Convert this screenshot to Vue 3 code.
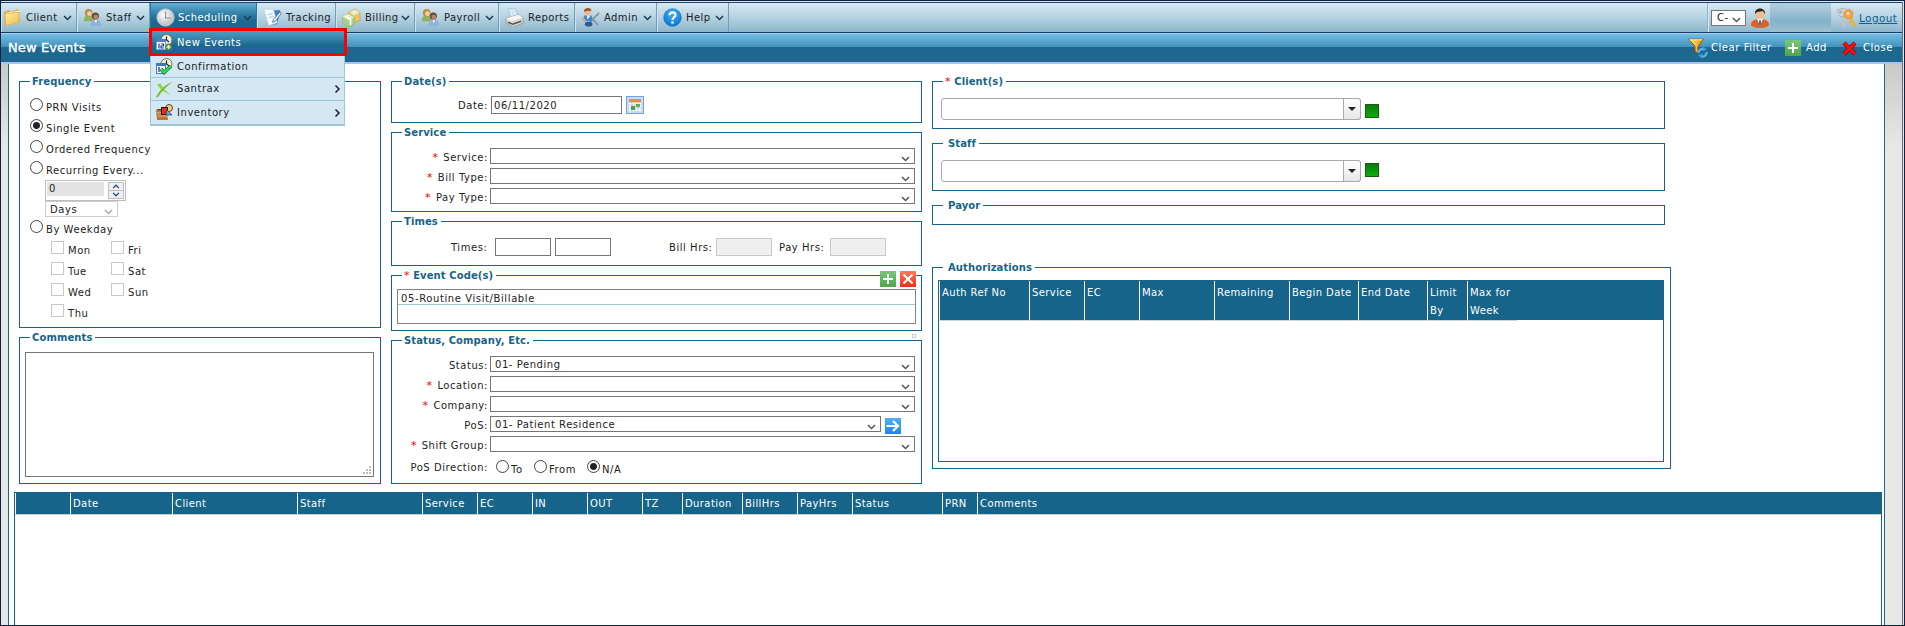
<template>
    <div class="app">
        <svg class="sprite" width="0" height="0">
            <defs>
                <linearGradient id="g-folder" x1="0" y1="0" x2="1" y2="1">
                    <stop offset="0" stop-color="#fff3b4" /><stop offset="1" stop-color="#f0b93c" />
                </linearGradient>
                <radialGradient id="g-clock" cx=".4" cy=".35" r=".7">
                    <stop offset="0" stop-color="#ffffff" /><stop offset="1" stop-color="#b4b8bd" />
                </radialGradient>
                <radialGradient id="g-help" cx=".5" cy=".3" r=".7">
                    <stop offset="0" stop-color="#3fb4f5" /><stop offset="1" stop-color="#0a74cf" />
                </radialGradient>
                <linearGradient id="g-green" x1="0" y1="0" x2="0" y2="1">
                    <stop offset="0" stop-color="#7cc67a" /><stop offset="1" stop-color="#4ca64a" />
                </linearGradient>
                <linearGradient id="g-red" x1="0" y1="0" x2="0" y2="1">
                    <stop offset="0" stop-color="#ff7a5c" /><stop offset="1" stop-color="#ee3018" />
                </linearGradient>
                <linearGradient id="g-blue" x1="0" y1="0" x2="0" y2="1">
                    <stop offset="0" stop-color="#4fb0f7" /><stop offset="1" stop-color="#1a86f0" />
                </linearGradient>
                <linearGradient id="g-funnel" x1="0" y1="0" x2="1" y2="0">
                    <stop offset="0" stop-color="#fff27a" /><stop offset="1" stop-color="#f08a00" />
                </linearGradient>
            </defs>
            <symbol id="ic-folder" viewBox="0 0 20 20">
                <path d="M1 4l5-2 2 2 8-3 1 13-9 4-6-1z" fill="#e2a93a" />
                <path d="M3 5l14-2v12L3 19z" fill="#fffbe6" />
                <path d="M2 6l15-1.500v10.500L3 18.500z" fill="url(#g-folder)" stroke="#d99f33" stroke-width=".7" />
            </symbol>
            <symbol id="ic-people" viewBox="0 0 20 20">
                <path d="M1 14c0-5 2-6 5-6s5 2 5 6z" fill="#8fb35c" />
                <circle cx="6" cy="5" r="4" fill="#b98a3c" />
                <circle cx="6.800" cy="6" r="2.500" fill="#f3cfa3" />
                <path d="M8 19c0-5 2-7 5.500-7s5.500 2 5.500 7z" fill="#8fb2dc" />
                <path d="M12 12l1.500 4 1.500-4z" fill="#fff" />
                <circle cx="13" cy="8.500" r="3.800" fill="#6b4a35" />
                <circle cx="13.500" cy="9.500" r="2.500" fill="#b98468" />
            </symbol>
            <symbol id="ic-clock" viewBox="0 0 20 20">
                <circle cx="10" cy="10" r="9" fill="url(#g-clock)" stroke="#c3c9ce" />
                <path d="M10 4v6.500h6" fill="none" stroke="#8b9096" stroke-width="1.200" />
            </symbol>
            <symbol id="ic-tracking" viewBox="0 0 20 20">
                <path d="M6 3l12-1-3 15-9 1z" fill="#3d83c4" />
                <path d="M1 1l10 .5 4 14-9 3z" fill="#f4f9fd" stroke="#b4cfe4" stroke-width=".6" />
                <path d="M5 7l5-1M6 10l5-1" stroke="#9cc0dd" />
                <path d="M18 4l-7 8-1 3 3-1 6-8z" fill="#e8f3fa" stroke="#3c688c" stroke-width=".8" />
            </symbol>
            <symbol id="ic-money" viewBox="0 0 20 20">
                <path d="M7 4l7-3 5 4v8l-7 3-5-5z" fill="#efc65c" stroke="#c99a3b" stroke-width=".6" />
                <path d="M8 4l6-2.500 4.500 3.500-6 3z" fill="#e6f0cf" />
                <path d="M0 9l7-3 6 4v7l-6 3-7-5z" fill="#a9cf88" stroke="#83ad66" stroke-width=".6" />
                <path d="M0 9l7-3 6 4-6 3z" fill="#ddeec8" />
                <path d="M3 8l6 4v6" fill="none" stroke="#fff" stroke-width="1.800" />
            </symbol>
            <symbol id="ic-printer" viewBox="0 0 20 20">
                <path d="M3 1l8-1 3 8-8 3z" fill="#cfe6fb" stroke="#9fb8d0" stroke-width=".7" />
                <path d="M1 11l13-4 5 3v6l-11 4-7-4z" fill="#d8d8d8" stroke="#888" stroke-width=".7" />
                <path d="M1 11l13-4 5 3-12 4z" fill="#f5f5f5" />
                <path d="M3 15l5 2 9-3" fill="none" stroke="#555" stroke-width="1.500" />
            </symbol>
            <symbol id="ic-admin" viewBox="0 0 20 20">
                <path d="M19 5l-2 2 1 1M17 7L8 17M9 8l9 10" stroke="#8d959c" stroke-width="1.700" fill="none" />
                <circle cx="7" cy="4" r="3.500" fill="#f1b98a" />
                <path d="M3 4c0-5 8-5 8-1l-4 0z" fill="#a14f1b" />
                <path d="M3 8h8l1 6H3z" fill="#3988da" />
                <path d="M6 8l1 4 3-4z" fill="#fff" />
                <path d="M1 10l4 4" stroke="#e6a173" stroke-width="2" />
                <ellipse cx="8" cy="17" rx="4" ry="2.500" fill="#2c5c98" />
            </symbol>
            <symbol id="ic-help" viewBox="0 0 20 20">
                <circle cx="10" cy="10" r="9.300" fill="url(#g-help)" stroke="#0f6fc0" stroke-width=".6" />
                <path d="M6.800 7.600C7 3.500 13.500 3.700 13.200 7.500c-.2 2.300-3.200 2.300-3.200 5" fill="none" stroke="#fff" stroke-width="2.200" />
                <circle cx="10" cy="15.300" r="1.400" fill="#fff" />
            </symbol>
            <symbol id="ic-event-add" viewBox="0 0 17 17">
                <circle cx="10.500" cy="6" r="5.500" fill="#f3eee0" stroke="#7a705c" />
                <path d="M10.500 2.500V6l2.500 2" fill="none" stroke="#222" stroke-width="1.200" />
                <rect x=".5" y="5.500" width="9" height="10" fill="#fff" stroke="#7f9fd6" />
                <rect x="0" y="5" width="10" height="3" fill="#4a7ccf" />
                <path d="M3 9.500v5M5 10h2.500v2H5v2h3" fill="none" stroke="#163a9a" stroke-width="1.200" />
                <circle cx="12.500" cy="13" r="3.500" fill="#4f8f32" />
                <path d="M12.500 11v4M10.500 13h4" stroke="#e6f5dc" stroke-width="1.300" />
            </symbol>
            <symbol id="ic-event-ok" viewBox="0 0 17 17">
                <circle cx="10.500" cy="6" r="5.500" fill="#f3eee0" stroke="#7a705c" />
                <path d="M10.500 2.500V6l2.500 2" fill="none" stroke="#222" stroke-width="1.200" />
                <rect x=".5" y="5.500" width="9" height="10" fill="#fff" stroke="#4a7ccf" />
                <rect x="0" y="5" width="10" height="3" fill="#3f78b8" />
                <path d="M3 9v5" stroke="#163a9a" stroke-width="1.300" />
                <path d="M5 11l3 3.500L15 8" fill="none" stroke="#137a2a" stroke-width="3.600" />
                <path d="M5 11l3 3.500L15 8" fill="none" stroke="#2fe05a" stroke-width="2" />
            </symbol>
            <symbol id="ic-santrax" viewBox="0 0 17 17">
                <path d="M1 3.500l3.500-1c2 4 5 8 10 11-6-2-9-4-13.500-10z" fill="#8fd43a" />
                <path d="M16.500 1C10 6 6 10 2.500 15.500L0 16.500C3 10 8 4 16.500 1z" fill="#6fbe24" />
            </symbol>
            <symbol id="ic-inventory" viewBox="0 0 17 17">
                <path d="M0 6h11v4l1 6H1z" fill="#b8773a" />
                <path d="M1 9h10M2 12h9" stroke="#e8b880" />
                <path d="M0 6l2-1h10v2z" fill="#6d3d18" />
                <circle cx="13" cy="4" r="3.500" fill="#f1cf85" stroke="#5d4620" />
                <rect x="5.500" y="3.500" width="6" height="7" fill="#d9301c" stroke="#3d0b05" />
                <path d="M11 6l5 5h-6z" fill="#6ba3d8" stroke="#24405c" stroke-width=".7" />
            </symbol>
            <symbol id="ic-user" viewBox="0 0 20 20">
                <path d="M1 17c0-4 3-5 6-6h6c3 1 6 2 6 6-2 4-16 4-18 0z" fill="#e0601c" />
                <path d="M7 11h6l-3 7z" fill="#f4f4f4" />
                <path d="M9.300 12h1.400l.8 4-1.500 2-1.500-2z" fill="#3b72b8" />
                <circle cx="10" cy="6.500" r="4.500" fill="#edbd91" />
                <path d="M5 6C4-1.500 16-1.500 15 6l-2-3-6 1z" fill="#2b211e" />
            </symbol>
            <symbol id="ic-keys" viewBox="0 0 20 22">
                <path d="M8 8v13M8 16H5M8 19H6" stroke="#bfc3c6" stroke-width="2.600" />
                <path d="M1 3l8-2 3 3-3 5-5 1z" fill="#d0d3d6" stroke="#a4a8ac" stroke-width=".7" />
                <circle cx="4.500" cy="5" r="1.300" fill="#8fa9b8" />
                <path d="M13 9l6 10M16 14l-3 2M18 17l-2 2" stroke="#e6b33e" stroke-width="2.400" />
                <path d="M8 5l5-3 4 3-1 6-5 1-3-3z" fill="#f3a445" stroke="#d98a25" stroke-width=".7" />
                <circle cx="12" cy="6.500" r="1.500" fill="#fbe6c0" />
            </symbol>
            <symbol id="ic-funnel" viewBox="0 0 20 20">
                <path d="M.7 1.200h14.600L10 8.500V15l-3-1.500v-5z" fill="url(#g-funnel)" stroke="#8d4a00" stroke-width=".9" />
                <path d="M1.500 1.800h13" stroke="#fff3c0" />
                <path d="M10.500 15a4 4 0 0 1 6-3.500M18.500 14a4 4 0 0 1-6 4" fill="none" stroke="#5db4ee" stroke-width="2.200" />
                <path d="M15 8.500l4 3-4.500 2zM14 20l-4-2.500 4.500-2.500z" fill="#3f9be0" />
            </symbol>
            <symbol id="ic-plus" viewBox="0 0 16 16">
                <rect width="16" height="16" fill="url(#g-green)" />
                <path d="M8 3v10M3 8h10" stroke="#fff" stroke-width="2" />
            </symbol>
            <symbol id="ic-remove" viewBox="0 0 16 16">
                <rect width="16" height="16" fill="url(#g-red)" />
                <path d="M3.500 3.500l9 9M12.500 3.500l-9 9" stroke="#fff" stroke-width="2" />
            </symbol>
            <symbol id="ic-go" viewBox="0 0 16 16">
                <rect width="16" height="16" fill="url(#g-blue)" />
                <path d="M1.500 8h11M8 3l5 5-5 5" fill="none" stroke="#fff" stroke-width="2.200" />
            </symbol>
            <symbol id="ic-close" viewBox="0 0 15 15">
                <path d="M2 2l11 11M13 2L2 13" stroke="#7d0000" stroke-width="4" />
                <path d="M2 2l11 11M13 2L2 13" stroke="#ff0c0c" stroke-width="3" />
            </symbol>
            <symbol id="ic-calendar" viewBox="0 0 18 18">
                <rect x=".5" y=".5" width="17" height="17" fill="#c9dcf5" stroke="#7aa0d8" />
                <rect x="3" y="3" width="12" height="12" fill="#fff" />
                <rect x="3" y="3" width="12" height="3.500" fill="#f58a3c" />
                <path d="M3 9h12M3 12h12M6 7v8M9 7v8M12 7v8" stroke="#b9bfd0" stroke-width=".8" />
                <rect x="5" y="10" width="4" height="4" fill="#4ea34e" />
                <rect x="10" y="8" width="4" height="3" fill="#5bb05b" />
            </symbol>
            <symbol id="ic-caret" viewBox="0 0 9 6">
                <path d="M1 1l3.500 3.500L8 1" fill="none" stroke="currentColor" stroke-width="1.500" />
            </symbol>
        </svg>

        <div class="shell">
            <nav class="menubar">
                <div v-for="item in menu" :key="item.name" class="menu-item" :class="{ active: item.active, first: item.name === 'Client' }" :style="{ width: item.width + 'px' }">
                    <svg class="menu-icon"><use :href="'#ic-' + item.icon" /></svg>
                    <span>{{ item.name }}</span>
                    <svg v-if="item.sub" class="caret"><use href="#ic-caret" /></svg>
                </div>
                <div class="user-area">
                    <div class="select company-select">C-<svg class="caret"><use href="#ic-caret" /></svg></div>
                    <svg class="user-icon"><use href="#ic-user" /></svg>
                    <div class="user-name"></div>
                    <svg class="keys-icon"><use href="#ic-keys" /></svg>
                    <a class="logout">Logout</a>
                </div>
                <div class="dropdown">
                    <div v-for="item in submenu" :key="item.name" class="sub-item" :class="{ current: item.current }">
                        <svg class="sub-icon"><use :href="'#ic-' + item.icon" /></svg>
                        <span>{{ item.name }}</span>
                        <svg v-if="item.sub" class="caret side"><use href="#ic-caret" /></svg>
                    </div>
                </div>
            </nav>

            <header class="titlebar">
                <h1>New Events</h1>
                <div class="action clear"><svg class="i20"><use href="#ic-funnel" /></svg>Clear Filter</div>
                <div class="action add"><svg class="i16"><use href="#ic-plus" /></svg>Add</div>
                <div class="action close"><svg class="i15"><use href="#ic-close" /></svg>Close</div>
            </header>

            <div class="body">
                <main class="panel">
                    <div class="columns">
                        <div class="col col-left">
                            <fieldset class="box frequency">
                                <legend>Frequency</legend>
                                <label v-for="f in frequencies" :key="f" class="radio-row">
                                    <i class="radio" :class="{ on: f === frequency }"></i><span>{{ f }}</span>
                                </label>
                                <div class="spinner">
                                    <div class="spin-value">0</div>
                                    <div class="spin-buttons">
                                        <b><svg class="caret up"><use href="#ic-caret" /></svg></b>
                                        <b><svg class="caret"><use href="#ic-caret" /></svg></b>
                                    </div>
                                </div>
                                <div class="select days">Days<svg class="caret"><use href="#ic-caret" /></svg></div>
                                <label class="radio-row"><i class="radio"></i><span>By Weekday</span></label>
                                <div class="weekdays">
                                    <label v-for="d in weekdays" :key="d" class="day"><i class="check"></i><span>{{ d }}</span></label>
                                </div>
                            </fieldset>
                            <fieldset class="box comments">
                                <legend>Comments</legend>
                                <div class="textarea">
                                    <svg width="8" height="8"><path d="M6 0h2v2H6zM3 3h2v2H3zM6 3h2v2H6zM0 6h2v2H0zM3 6h2v2H3zM6 6h2v2H6z" fill="#bdbdbd" /></svg>
                                </div>
                            </fieldset>
                        </div>

                        <div class="col col-mid">
                            <fieldset class="box dates">
                                <legend>Date(s)</legend>
                                <div class="field">
                                    <label>Date:</label>
                                    <div class="input date-input">06/11/2020</div>
                                    <svg class="i18"><use href="#ic-calendar" /></svg>
                                </div>
                            </fieldset>
                            <fieldset class="box service">
                                <legend>Service</legend>
                                <div v-for="s in serviceFields" :key="s" class="field">
                                    <label><em>*</em> {{ s }}:</label>
                                    <div class="select"><svg class="caret"><use href="#ic-caret" /></svg></div>
                                </div>
                            </fieldset>
                            <fieldset class="box times">
                                <legend>Times</legend>
                                <div class="times-row">
                                    <label class="t-label">Times:</label>
                                    <div class="input time"></div>
                                    <div class="input time"></div>
                                    <label class="bill-label">Bill Hrs:</label>
                                    <div class="input time off"></div>
                                    <label class="pay-label">Pay Hrs:</label>
                                    <div class="input time off"></div>
                                </div>
                            </fieldset>
                            <fieldset class="box codes">
                                <legend><em>*</em> Event Code(s)</legend>
                                <div class="code-actions">
                                    <svg class="i16"><use href="#ic-plus" /></svg>
                                    <svg class="i16"><use href="#ic-remove" /></svg>
                                </div>
                                <div class="listbox"><div class="list-row">05-Routine Visit/Billable</div></div>
                                <i class="grip"></i>
                            </fieldset>
                            <fieldset class="box status">
                                <legend>Status, Company, Etc.</legend>
                                <div v-for="s in statusFields" :key="s.label" class="field">
                                    <label><em v-if="s.required">*</em> {{ s.label }}:</label>
                                    <div class="select" :class="{ short: s.go }">{{ s.value }}<svg class="caret"><use href="#ic-caret" /></svg></div>
                                    <svg v-if="s.go" class="i16 go"><use href="#ic-go" /></svg>
                                </div>
                                <div class="field direction">
                                    <label>PoS Direction:</label>
                                    <div v-for="d in directions" :key="d.name" class="dir" :style="{ width: d.width + 'px' }">
                                        <i class="radio" :class="{ on: d.name === 'N/A' }"></i><span>{{ d.name }}</span>
                                    </div>
                                </div>
                            </fieldset>
                        </div>

                        <div class="col col-right">
                            <fieldset class="box picker">
                                <legend class="starred"><em>*</em> Client(s)</legend>
                                <div class="combo-row"><div class="combo"><b></b></div><i class="square low"></i></div>
                            </fieldset>
                            <fieldset class="box picker">
                                <legend>Staff</legend>
                                <div class="combo-row"><div class="combo"><b></b></div><i class="square"></i></div>
                            </fieldset>
                            <fieldset class="box payor"><legend>Payor</legend></fieldset>
                            <fieldset class="box auths">
                                <legend>Authorizations</legend>
                                <div class="auth-table">
                                    <div class="thead">
                                        <div v-for="c in authColumns" :key="c.name" class="th" :style="{ width: c.width + 'px' }">{{ c.name }}</div>
                                    </div>
                                </div>
                            </fieldset>
                        </div>
                    </div>

                    <div class="event-table">
                        <div class="thead">
                            <div v-for="c in eventColumns" :key="c.name" class="th" :style="{ width: c.width + 'px' }">{{ c.name }}</div>
                        </div>
                    </div>
                </main>
            </div>
        </div>
    </div>
</template>

<script setup>
import { ref } from 'vue';

const menu = [
    { name: 'Client', icon: 'folder', width: 76, sub: true },
    { name: 'Staff', icon: 'people', width: 73, sub: true },
    { name: 'Scheduling', icon: 'clock', width: 107, sub: true, active: true },
    { name: 'Tracking', icon: 'tracking', width: 79 },
    { name: 'Billing', icon: 'money', width: 79, sub: true },
    { name: 'Payroll', icon: 'people', width: 84, sub: true },
    { name: 'Reports', icon: 'printer', width: 76 },
    { name: 'Admin', icon: 'admin', width: 82, sub: true },
    { name: 'Help', icon: 'help', width: 72, sub: true }
];

const submenu = [
    { name: 'New Events', icon: 'event-add', current: true },
    { name: 'Confirmation', icon: 'event-ok' },
    { name: 'Santrax', icon: 'santrax', sub: true },
    { name: 'Inventory', icon: 'inventory', sub: true }
];

const frequency = ref('Single Event');
const frequencies = ['PRN Visits', 'Single Event', 'Ordered Frequency', 'Recurring Every...'];
const weekdays = ['Mon', 'Fri', 'Tue', 'Sat', 'Wed', 'Sun', 'Thu'];

const serviceFields = ['Service', 'Bill Type', 'Pay Type'];

const statusFields = [
    { label: 'Status', value: '01- Pending' },
    { label: 'Location', required: true },
    { label: 'Company', required: true },
    { label: 'PoS', value: '01- Patient Residence', go: true },
    { label: 'Shift Group', required: true }
];

const directions = [
    { name: 'To', width: 38 },
    { name: 'From', width: 53 },
    { name: 'N/A', width: 50 }
];

const authColumns = [
    { name: 'Auth Ref No', width: 90 },
    { name: 'Service', width: 55 },
    { name: 'EC', width: 55 },
    { name: 'Max', width: 75 },
    { name: 'Remaining', width: 75 },
    { name: 'Begin Date', width: 69 },
    { name: 'End Date', width: 69 },
    { name: 'Limit By', width: 40 },
    { name: 'Max for Week', width: 50 }
];

const eventColumns = [
    { name: '', width: 55 },
    { name: 'Date', width: 102 },
    { name: 'Client', width: 125 },
    { name: 'Staff', width: 125 },
    { name: 'Service', width: 55 },
    { name: 'EC', width: 55 },
    { name: 'IN', width: 55 },
    { name: 'OUT', width: 55 },
    { name: 'TZ', width: 40 },
    { name: 'Duration', width: 60 },
    { name: 'BillHrs', width: 55 },
    { name: 'PayHrs', width: 55 },
    { name: 'Status', width: 90 },
    { name: 'PRN', width: 35 },
    { name: 'Comments', width: 100 }
];
</script>

<style>
    body {
        margin: 0;
        overflow: hidden;
    }
</style>

<style scoped>
    * {
        box-sizing: border-box;
    }

    .app {
        width: 1905px;
        height: 626px;
        border: 1px solid #0c2142;
        background: #dde6ee;
        padding: 1px 1px 0 0;
        overflow: hidden;
        color: #222;
        font-family: Verdana, "DejaVu Sans", sans-serif;
        font-size: 10px;
        letter-spacing: 0.55px;
        line-height: 14px;
        white-space: nowrap;
    }

    .sprite {
        position: absolute;
    }

    .shell {
        height: 100%;
        border-right: 1px solid #6f6f6f;
        display: flex;
        flex-direction: column;
    }

    em {
        color: #f00000;
        font-style: normal;
        font-weight: normal;
        font-size: 11px;
        margin-right: 1px;
    }

    svg {
        flex: none;
    }

    .caret {
        width: 9px;
        height: 6px;
    }

    .i15 { width: 15px; height: 15px; }
    .i16 { width: 16px; height: 16px; }
    .i18 { width: 18px; height: 18px; }
    .i20 { width: 20px; height: 20px; }

    /* top menu */
    .menubar {
        position: relative;
        display: flex;
        height: 31px;
        flex: none;
        border-top: 1px solid #17486b;
        border-bottom: 1px solid #123f60;
        background: linear-gradient(#d6e9f3, #b5d2e1 50%, #8db5cb);
    }

    .menu-item {
        display: flex;
        align-items: center;
        padding: 0 4px 0 5px;
        border-right: 1px solid #6fa0ba;
        border-left: 1px solid #cfe3ee;
        letter-spacing: 0.42px;
    }

    .menu-item.first {
        padding-left: 1px;
    }

    .menu-item.active {
        color: #fff;
        border-color: #2a769f;
        background: linear-gradient(#67aed3, #3583aa 35%, #1d6890 60%, #1d6890);
    }

    .menu-item .caret {
        margin-left: auto;
        color: #1d3c4e;
    }

    .menu-icon {
        width: 19px;
        height: 19px;
        margin-right: 4px;
    }

    .menu-item.active .menu-icon {
        margin-right: 3px;
    }

    .user-area {
        display: flex;
        align-items: center;
        width: 195px;
        margin-left: auto;
        padding-left: 3px;
        border-left: 1px solid #8db5cb;
        box-shadow: inset 1px 0 #d6e9f3;
    }

    .company-select.select {
        flex: none;
        width: 35px;
        padding: 0 4px 0 5px;
    }

    .user-icon {
        width: 20px;
        height: 20px;
        margin-left: 4px;
    }

    .user-name {
        width: 61px;
        height: 29px;
        background: linear-gradient(#b1cfdf, #a5c5d6 25%, #84b3ca 60%, #8db7cc 80%, #a0c2d3);
    }

    .keys-icon {
        width: 20px;
        height: 22px;
        margin: 0 3px 0 5px;
    }

    .logout {
        color: #0e5f92;
        text-decoration: underline;
        font-size: 10.5px;
        letter-spacing: 0.4px;
    }

    .dropdown {
        position: absolute;
        z-index: 5;
        left: 149px;
        top: 26px;
        width: 195px;
        height: 97px;
        background: #d3e8f3;
        border-bottom: 2px solid #a1c6d6;
        border-left: 1px solid #a1c6d6;
        border-right: 1px solid #a1c6d6;
    }

    .sub-item {
        display: flex;
        align-items: center;
        height: 23px;
        padding: 0 2px 0 5px;
        border-bottom: 1px solid #a1c6d6;
    }

    .sub-item:nth-child(2) {
        height: 22px;
    }

    .sub-item:last-child {
        border-bottom: none;
    }

    .sub-item.current {
        height: 28px;
        margin: -1px -3px 0 -2px;
        padding: 1px 0 0 4px;
        color: #fff;
        background: linear-gradient(#4f9cc3, #3583aa 35%, #1d6890 65%);
        border: 3px solid #fb0000;
    }

    .sub-icon {
        width: 17px;
        height: 17px;
        margin-right: 4px;
    }

    .caret.side {
        transform: rotate(-90deg);
        margin-left: auto;
    }

    /* title */
    .titlebar {
        display: flex;
        align-items: center;
        height: 31px;
        flex: none;
        border-top: 1px solid #a9cdf0;
        border-bottom: 2px solid #b3c0ee;
        background: linear-gradient(#73bde5, #4192b9 13px, #1d6890 13px);
        color: #fff;
    }

    h1 {
        margin: 0 auto 0 7px;
        font-size: 13px;
        font-weight: normal;
        letter-spacing: 0.1px;
        -webkit-text-stroke: 0.4px #fff;
    }

    .action {
        display: flex;
        align-items: center;
    }

    .clear { width: 97px; }
    .clear svg { margin-right: 3px; }
    .add { width: 57px; }
    .add svg { margin-right: 5px; }
    .close { width: 60px; }
    .close svg { margin-right: 6px; }

    .body {
        flex: 1;
        display: flex;
        padding: 0 17px 0 7px;
        background: linear-gradient(#c9c9c9, #dadada 45px, #e8e8e8 85px);
    }

    .panel {
        flex: 1;
        display: flex;
        flex-direction: column;
        border-left: 1px solid #1d6890;
        border-right: 1px solid #1d6890;
        background: #fff;
    }

    .columns {
        display: flex;
        gap: 10px;
        height: 420px;
        flex: none;
        padding: 17px 0 0 10px;
    }

    .col {
        display: flex;
        flex-direction: column;
        gap: 9px;
    }

    .col-left { width: 362px; }
    .col-mid { width: 531px; }
    .col-right { width: 739px; gap: 14px; }

    .box {
        flex: none;
        min-width: 0;
        margin: 0;
        padding: 0;
        border: 1px solid #17648a;
    }

    legend {
        height: 1px;
        margin-left: 10px;
        padding: 0 3px 0 2px;
        line-height: 1px;
        color: #17648a;
        font-weight: bold;
        letter-spacing: 0.1px;
    }

    legend em {
        margin-right: 0;
        line-height: 1px;
    }

    .col-right legend {
        padding-left: 5px;
    }

    .col-right legend.starred {
        padding-left: 2px;
    }

    /* frequency */
    .frequency { height: 247px; }
    .comments { height: 147px; }

    .radio-row {
        display: flex;
        height: 21px;
        padding-left: 10px;
    }

    .radio {
        flex: none;
        width: 13px;
        height: 13px;
        border: 1px solid #444;
        border-radius: 50%;
        background: #fff;
    }

    .radio.on {
        background: radial-gradient(circle, #222 3px, #fff 4px);
    }

    .radio-row span {
        margin: 3px 0 0 3px;
    }

    .frequency legend + .radio-row {
        margin-top: 16px;
    }

    .spinner {
        display: flex;
        justify-content: space-between;
        width: 81px;
        height: 21px;
        margin: -2px 0 0 25px;
        padding: 1px;
        border: 1px solid #bdbdbd;
    }

    .spin-value {
        width: 57px;
        height: 14px;
        padding-left: 2px;
        background: #e3e3e3;
    }

    .spin-buttons {
        width: 16px;
    }

    .spin-buttons b {
        display: flex;
        align-items: center;
        justify-content: center;
        height: 9px;
        margin-bottom: -1px;
        border: 1px solid #bdbdbd;
        background: #efefef;
        color: #1d4a82;
    }

    .spin-buttons .caret {
        width: 8px;
        height: 5px;
    }

    .caret.up {
        transform: rotate(180deg);
    }

    .select {
        display: flex;
        align-items: center;
        flex: 1;
        height: 16px;
        padding: 1px 4px 0;
        border: 1px solid #767676;
        background: #fff;
        color: #222;
    }

    .select .caret {
        margin: 4px 0 0 auto;
        color: #555;
    }

    .select.days {
        width: 73px;
        margin: 0 0 3px 25px;
        border-color: #ccc;
    }

    .select.days .caret {
        color: #aaa;
    }

    .weekdays {
        display: grid;
        grid-template-columns: 60px 60px;
        margin-left: 31px;
    }

    .day {
        display: flex;
        height: 21px;
    }

    .day span {
        margin: 3px 0 0 4px;
    }

    .check {
        width: 13px;
        height: 13px;
        border: 1px solid #c8c8c8;
    }

    .textarea {
        display: flex;
        align-items: flex-end;
        justify-content: flex-end;
        width: 349px;
        height: 125px;
        margin: 14px 0 0 5px;
        padding: 2px;
        border: 1px solid #767676;
    }

    /* dates, service, times, codes, status */
    .dates { height: 42px; padding-top: 14px; }
    .service { height: 80px; padding-top: 15px; }
    .times { height: 45px; padding-top: 16px; }
    .codes { position: relative; height: 56px; padding-top: 13px; }
    .status { height: 144px; padding-top: 15px; }

    .field {
        display: flex;
        align-items: center;
        height: 20px;
        padding-right: 6px;
    }

    .field label {
        flex: none;
        width: 96px;
        margin-right: 2px;
        text-align: right;
    }

    .field > .select {
        margin-bottom: 4px;
    }

    .field .select.short {
        flex: none;
        width: 391px;
    }

    .field .go {
        margin-left: 4px;
    }

    .input {
        height: 18px;
        padding: 2px 2px;
        border: 1px solid #767676;
        background: #fff;
    }

    .dates .field {
        height: 18px;
    }

    .dates .field label,
    .times-row label {
        padding-top: 2px;
    }

    .date-input {
        width: 131px;
        margin: 0 4px 0 1px;
        letter-spacing: 0.55px;
    }

    .times-row {
        display: flex;
        align-items: center;
        padding-left: 59px;
    }

    .t-label { width: 44px; }
    .bill-label { width: 47px; margin-left: 54px; }
    .pay-label { width: 51px; margin-left: 3px; }

    .time {
        width: 56px;
        margin-right: 4px;
    }

    .time.off {
        border-color: #c8c8c8;
        background: #efefef;
    }

    .code-actions {
        position: absolute;
        top: -5px;
        right: 5px;
        display: flex;
        gap: 4px;
        background: #fff;
    }

    .listbox {
        width: 519px;
        height: 35px;
        margin-left: 5px;
        border: 1px solid #808088;
    }

    .list-row {
        height: 15px;
        padding: 3px 0 0 3px;
        line-height: 12px;
        letter-spacing: 0.6px;
        border-bottom: 1px solid #a1c6d6;
    }

    .grip {
        position: absolute;
        right: 5px;
        top: 58px;
        width: 4px;
        height: 4px;
        border: 1px solid #ccc;
    }

    .direction {
        margin-top: 2px;
    }

    .direction label {
        margin-right: 8px;
    }

    .dir {
        display: flex;
        flex: none;
    }

    .dir span {
        margin: 3px 0 0 2px;
    }

    /* clients, staff, authorizations */
    .picker { width: 733px; height: 48px; padding-top: 16px; }
    .payor { width: 733px; height: 20px; }
    .auths { height: 202px; margin-top: 28px; padding: 12px 0 0 5px; }

    .auths legend {
        margin-left: 5px;
    }

    .combo-row {
        display: flex;
        padding-left: 8px;
    }

    .combo {
        display: flex;
        justify-content: flex-end;
        width: 420px;
        height: 22px;
        border: 1px solid #aaa;
        border-radius: 3px;
    }

    .combo b {
        display: flex;
        align-items: center;
        justify-content: center;
        width: 18px;
        margin: -1px;
        border: 1px solid #aaa;
        border-radius: 0 3px 3px 0;
        background: linear-gradient(#fff, #e6e6e6);
    }

    .combo b::before {
        content: "";
        border: 4px solid transparent;
        border-top-color: #222;
        border-bottom: none;
    }

    .square {
        width: 14px;
        height: 14px;
        margin: 3px 0 0 4px;
        border: 1px solid #1c5c10;
        background: linear-gradient(#0a7c0a, #0cae0c);
    }

    .square.low {
        margin-top: 6px;
    }

    .auth-table {
        width: 726px;
        height: 182px;
        border: 1px solid #17648a;
    }

    .thead {
        display: flex;
        background: #17648a;
        color: #fff;
    }

    .th {
        flex: none;
        padding-left: 2px;
        border-left: 1px solid #fff;
        white-space: normal;
        letter-spacing: 0.4px;
    }

    .auth-table .thead {
        height: 39px;
    }

    .auth-table .th {
        height: 40px;
        padding-top: 3px;
        line-height: 18px;
        border-bottom: 1px solid #ccd3da;
    }

    .event-table {
        flex: 1;
        width: 1868px;
        margin: 8px 0 0 5px;
        border: 1px solid #17648a;
        border-bottom: none;
    }

    .event-table .thead {
        height: 22px;
        line-height: 22px;
        border-bottom: 1px solid #ccc;
    }
</style>
